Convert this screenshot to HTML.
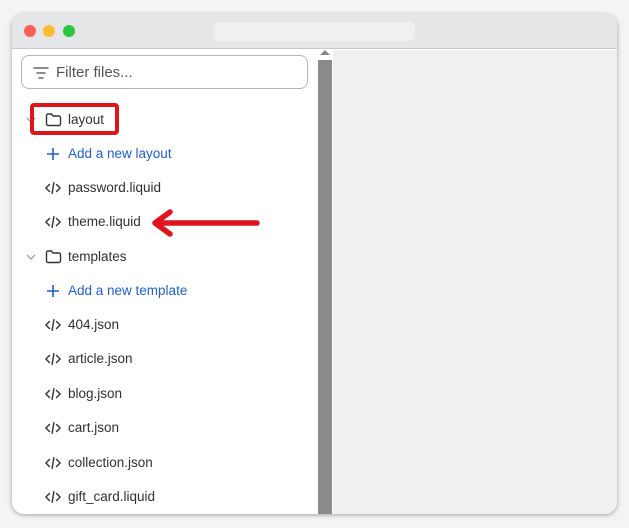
<!DOCTYPE html>
<html><head><style>
*{margin:0;padding:0;box-sizing:border-box}
body{width:629px;height:528px;background:#f4f4f4;font-family:"Liberation Sans",sans-serif;position:relative;overflow:hidden}
.win{position:absolute;left:12px;top:14px;width:605px;height:500px;border-radius:12px;background:#fff;overflow:hidden;box-shadow:0 1px 5px rgba(0,0,0,.35)}
.tb{position:absolute;left:0;top:0;width:100%;height:35px;background:#e5e6e8;border-bottom:1px solid #c8c8c8}
.dot{position:absolute;top:11px;width:12px;height:12px;border-radius:50%}
.addr{position:absolute;left:202px;top:8px;width:201px;height:19px;border-radius:5px;background:#f0f0f0}
.right{position:absolute;left:321px;top:36px;right:0;bottom:0;background:#f0f0f0}
.sb{position:absolute;left:306px;top:46px;width:14px;bottom:0;background:#8a8a8a}
.arr{position:absolute;left:308px;top:36px;width:0;height:0;border-left:5px solid transparent;border-right:5px solid transparent;border-bottom:5px solid #888}
.filter{position:absolute;left:9px;top:41px;width:287px;height:34px;border:1px solid #b5b5b5;border-radius:8px;font-size:15px;color:#555}
.row{position:absolute;left:0;font-size:13.5px;color:#303030;height:20px;line-height:20px}
.row span{position:absolute;left:56px;white-space:nowrap}
.blue{color:#1f5fcf}
svg{position:absolute}
</style></head><body>
<div class="win">
<div class="tb"><div class="dot" style="left:12px;background:#fe5f57"></div><div class="dot" style="left:31px;background:#febc2e"></div><div class="dot" style="left:51px;background:#28c840"></div><div class="addr"></div></div>
<div class="filter"><svg style="left:11px;top:10px" width="16" height="14" viewBox="0 0 16 14"><path d="M1 2h14M4 7h8M6 12h4" stroke="#666" stroke-width="1.4" fill="none" stroke-linecap="round"/></svg><span style="position:absolute;left:34px;top:8px">Filter files...</span></div>
<div class="arr"></div><div class="sb"></div><div class="right"></div>

<div class="row" style="top:96px"><svg style="left:14px;top:7px" width="10" height="7"><path d="M1 1l4 4 4-4" stroke="#888" fill="none"/></svg><svg style="left:33px;top:2px" width="17" height="15" viewBox="0 0 17 15"><path d="M1.5 3.5a1.5 1.5 0 0 1 1.5-1.5h3.5l1.5 2h6a1.5 1.5 0 0 1 1.5 1.5v6.5a1.5 1.5 0 0 1-1.5 1.5H3a1.5 1.5 0 0 1-1.5-1.5z" stroke="#333" stroke-width="1.4" fill="none"/></svg><span>layout</span></div>
<div class="row blue" style="top:130px"><svg style="left:35px;top:4px" width="12" height="12"><path d="M6 0v12M0 6h12" stroke="#1f5fcf" stroke-width="1.6"/></svg><span>Add a new layout</span></div>
<div class="row" style="top:164px"><svg style="left:33px;top:3px" width="16" height="14" viewBox="0 0 18 14"><path d="M5 3L1 7l4 4M13 3l4 4-4 4M10 1L8 13" stroke="#333" stroke-width="1.6" fill="none" stroke-linecap="round" stroke-linejoin="round"/></svg><span>password.liquid</span></div>
<div class="row" style="top:198px"><svg style="left:33px;top:3px" width="16" height="14" viewBox="0 0 18 14"><path d="M5 3L1 7l4 4M13 3l4 4-4 4M10 1L8 13" stroke="#333" stroke-width="1.6" fill="none" stroke-linecap="round" stroke-linejoin="round"/></svg><span>theme.liquid</span></div>
<div class="row" style="top:233px"><svg style="left:14px;top:7px" width="10" height="7"><path d="M1 1l4 4 4-4" stroke="#888" fill="none"/></svg><svg style="left:33px;top:2px" width="17" height="15" viewBox="0 0 17 15"><path d="M1.5 3.5a1.5 1.5 0 0 1 1.5-1.5h3.5l1.5 2h6a1.5 1.5 0 0 1 1.5 1.5v6.5a1.5 1.5 0 0 1-1.5 1.5H3a1.5 1.5 0 0 1-1.5-1.5z" stroke="#333" stroke-width="1.4" fill="none"/></svg><span>templates</span></div>
<div class="row blue" style="top:267px"><svg style="left:35px;top:4px" width="12" height="12"><path d="M6 0v12M0 6h12" stroke="#1f5fcf" stroke-width="1.6"/></svg><span>Add a new template</span></div>
<div class="row" style="top:301px"><svg style="left:33px;top:3px" width="16" height="14" viewBox="0 0 18 14"><path d="M5 3L1 7l4 4M13 3l4 4-4 4M10 1L8 13" stroke="#333" stroke-width="1.6" fill="none" stroke-linecap="round" stroke-linejoin="round"/></svg><span>404.json</span></div>
<div class="row" style="top:335px"><svg style="left:33px;top:3px" width="16" height="14" viewBox="0 0 18 14"><path d="M5 3L1 7l4 4M13 3l4 4-4 4M10 1L8 13" stroke="#333" stroke-width="1.6" fill="none" stroke-linecap="round" stroke-linejoin="round"/></svg><span>article.json</span></div>
<div class="row" style="top:370px"><svg style="left:33px;top:3px" width="16" height="14" viewBox="0 0 18 14"><path d="M5 3L1 7l4 4M13 3l4 4-4 4M10 1L8 13" stroke="#333" stroke-width="1.6" fill="none" stroke-linecap="round" stroke-linejoin="round"/></svg><span>blog.json</span></div>
<div class="row" style="top:404px"><svg style="left:33px;top:3px" width="16" height="14" viewBox="0 0 18 14"><path d="M5 3L1 7l4 4M13 3l4 4-4 4M10 1L8 13" stroke="#333" stroke-width="1.6" fill="none" stroke-linecap="round" stroke-linejoin="round"/></svg><span>cart.json</span></div>
<div class="row" style="top:439px"><svg style="left:33px;top:3px" width="16" height="14" viewBox="0 0 18 14"><path d="M5 3L1 7l4 4M13 3l4 4-4 4M10 1L8 13" stroke="#333" stroke-width="1.6" fill="none" stroke-linecap="round" stroke-linejoin="round"/></svg><span>collection.json</span></div>
<div class="row" style="top:473px"><svg style="left:33px;top:3px" width="16" height="14" viewBox="0 0 18 14"><path d="M5 3L1 7l4 4M13 3l4 4-4 4M10 1L8 13" stroke="#333" stroke-width="1.6" fill="none" stroke-linecap="round" stroke-linejoin="round"/></svg><span>gift_card.liquid</span></div>

<div style="position:absolute;left:18px;top:89px;width:89px;height:32px;border:4px solid #e0141c;border-radius:4px"></div>
<svg style="left:138px;top:195px" width="112" height="30" viewBox="0 0 112 30"><path d="M107 14H6M20 3L5 14l15 11" stroke="#e0141c" stroke-width="5.5" fill="none" stroke-linecap="round" stroke-linejoin="round"/></svg>
</div>
</body></html>
